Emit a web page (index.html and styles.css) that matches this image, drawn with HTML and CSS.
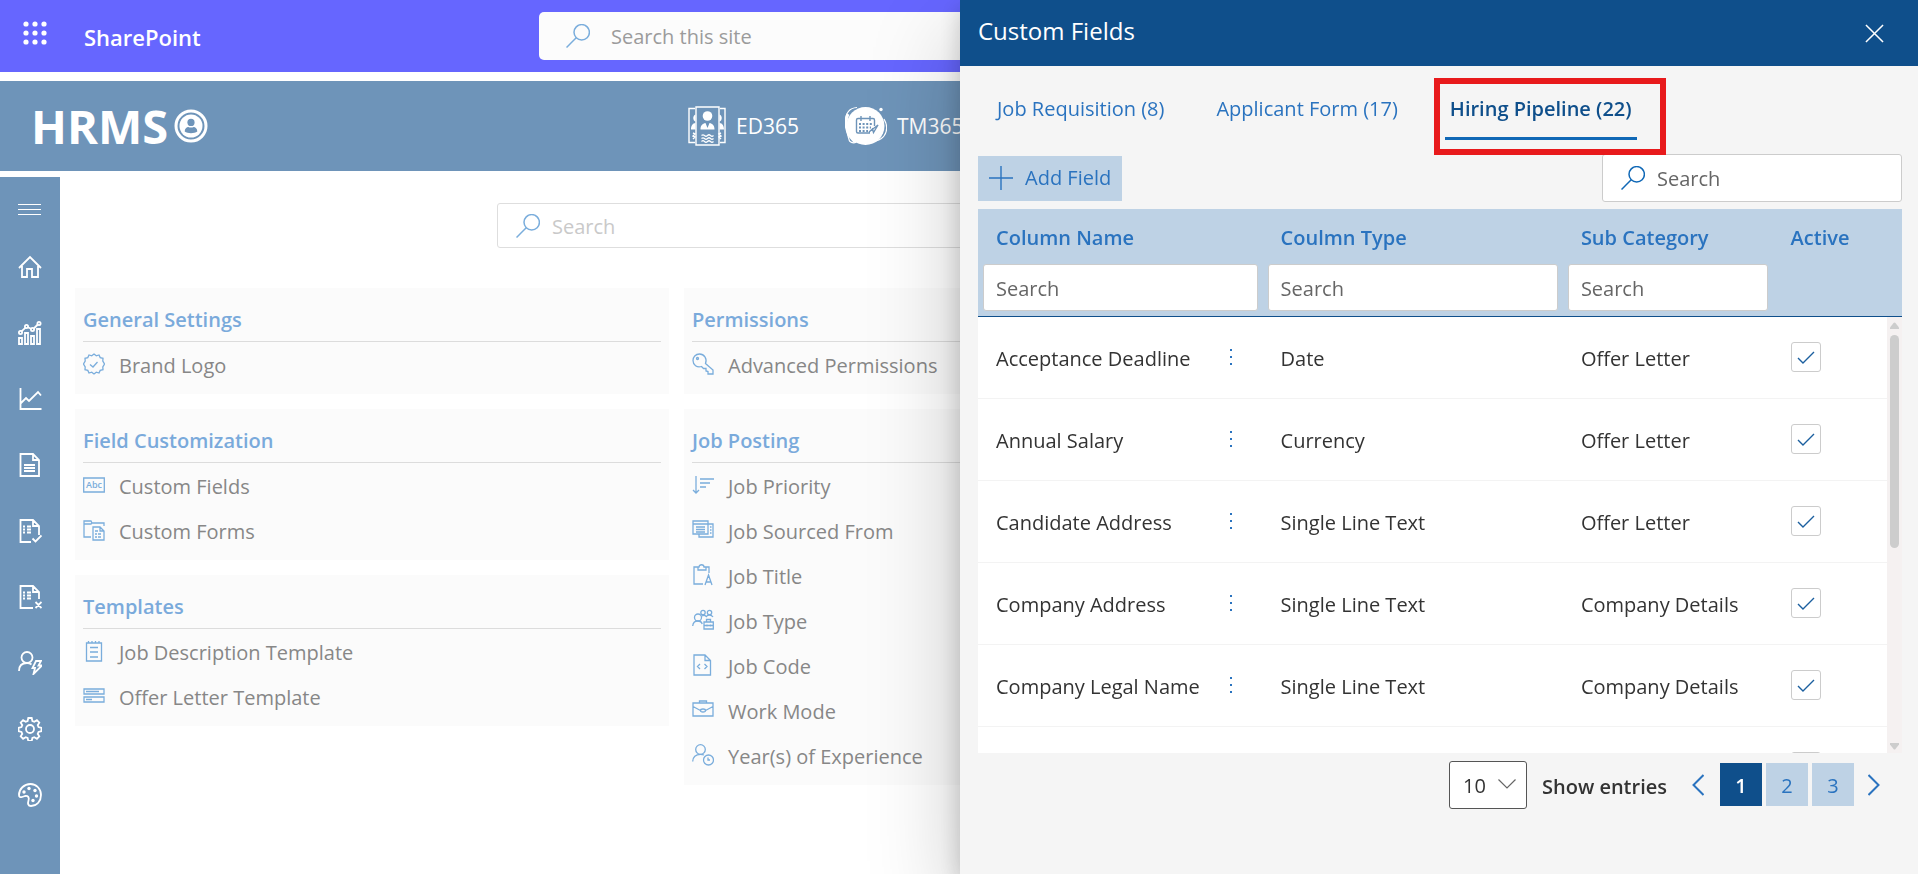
FILE: index.html
```html
<!DOCTYPE html>
<html lang="en">
<head>
<meta charset="utf-8">
<meta name="viewport" content="width=device-width, initial-scale=1">
<title>HRMS - Custom Fields</title>
<link rel="stylesheet" href="styles.css">
</head>
<body>
<svg class="sprite" aria-hidden="true">
  <symbol id="i-search" viewBox="0 0 24 24"><circle cx="15.7" cy="8.3" r="7.7"/><path d="M10.2 13.8L.5 23.5"/></symbol>
  <symbol id="i-check" viewBox="0 0 28 28"><path d="M6 15l5 5L22 9"/></symbol>
  <symbol id="i-dots" viewBox="0 0 4 18"><path d="M1 1h2v2H1zM1 8h2v2H1zM1 15h2v2H1z"/></symbol>
</svg>

<header class="suite-bar">
  <button class="icon-button" aria-label="App launcher">
    <svg class="waffle" viewBox="0 0 24 24"><g><circle cx="3" cy="3" r="2.6"/><circle cx="12" cy="3" r="2.6"/><circle cx="21" cy="3" r="2.6"/><circle cx="3" cy="12" r="2.6"/><circle cx="12" cy="12" r="2.6"/><circle cx="21" cy="12" r="2.6"/><circle cx="3" cy="21" r="2.6"/><circle cx="12" cy="21" r="2.6"/><circle cx="21" cy="21" r="2.6"/></g></svg>
  </button>
  <a class="suite-name" href="#">SharePoint</a>
  <label class="suite-search">
    <svg class="icon"><use href="#i-search"/></svg>
    <input type="text" placeholder="Search this site" aria-label="Search this site">
  </label>
</header>

<div class="brand-bar">
  <a class="brand" href="#">HRMS
    <svg viewBox="0 0 34 34"><circle cx="17" cy="17" r="15" fill="none" stroke="#fff" stroke-width="3"/><circle cx="17" cy="17" r="11.5" fill="#fff"/><g fill="#6e94b9"><circle cx="17" cy="13.4" r="3.6"/><path d="M10.7 22.6c0-3 2-4.6 3.6-4.6 1.600.8 3.800.8 5.400 0 1.600 0 3.600 1.600 3.600 4.600-3 2.200-9.600 2.200-12.600 0z"/></g></svg>
  </a>
  <nav class="apps">
    <a class="app" href="#">
      <svg class="app-ed" viewBox="0 0 38 40"><g fill="none" stroke="#fff" stroke-width="1.400"><path d="M8 1h23v38H8z"/><path d="M7 2.500H1v34h6M32 2.500h5v34h-5"/><path d="M13.500 29.500q1.500-1.500 3 0t3 0 3 0 3 0M13.500 32.500q1.500-1.500 3 0t3 0 3 0 3 0M13.500 35.500q1.500-1.500 3 0t3 0 3 0 3 0" stroke-width="1.200"/><path d="M5 27l2 1-2 2 2 1-2 2M33 27l-2 1 2 2-2 1 2 2"/></g><g fill="#fff"><circle cx="19.500" cy="10" r="4.800"/><path d="M12.500 23.500c0-4 2-6 5-6.500l2 5 2-5c3 .5 5 2.500 5 6.500zM7.500 8.500c-3 1-3 6 0 7zM7.500 17c-3 0-4.500 3-4.500 6.500h4.500zM31.500 8.500c3 1 3 6 0 7zM31.500 17c3 0 4.500 3 4.500 6.500h-4.500z"/></g></svg>
      ED365</a>
    <a class="app" href="#">
      <svg class="app-tm" viewBox="0 0 42 40"><circle cx="20.500" cy="20" r="19" fill="#fff"/><g fill="none" stroke="#fff"><path d="M12 1.500C4 2 .5 8 .6 16c0 6 2 10 3.400 14M1.500 24c1 4 2 8 3 11 2 2 5 2 7 1M39 13c3.500 6 3.500 12 0 17-2 3-5 4-8 5" stroke-width="1.200"/><path d="M3 8C0 14 1 22 4 29l6 7" stroke-width="3"/></g><circle cx="36" cy="3.500" r="1.700" fill="#fff"/><g fill="none" stroke="#6e94b9" stroke-width="1.400"><path d="M25 27H13q-1.500 0-1.500-1.500V14q0-1.500 1.500-1.500h15q1.500 0 1.500 1.500v6M16 10v5M25 10v5M24 26l9-7-4.500 7.500-1-3.500z"/><path d="M14 18h13M14 21.500h12M14 25h9" stroke-width="2" stroke-dasharray="2 1.600"/></g></svg>
      TM365</a>
  </nav>
</div>

<div class="shell">
  <nav class="rail" aria-label="Main">
    <button class="rail-menu" aria-label="Menu"><svg viewBox="0 0 24 24"><path d="M0 7.500h23M0 12.500h23M0 17.500h23" stroke-width="1"/></svg></button>
    <a href="#" aria-label="Home"><svg viewBox="0 0 24 24"><path d="M1 13L12 2l11 11M4 11v11h5v-8h5v8h6V11"/></svg></a>
    <a href="#" aria-label="Analytics"><svg viewBox="0 0 24 24"><path d="M1 17h3v6H1zM7 12h3v11H7zM13 15h3v8h-3zM19 8h3v15h-3z"/><circle cx="2.500" cy="11.500" r="1.600"/><circle cx="8.500" cy="5.500" r="1.600"/><circle cx="14.500" cy="8.500" r="1.600"/><circle cx="21" cy="2.500" r="1.600"/><path d="M3.500 10.300l4-3.700M10 6.200l3 1.500M15.800 7.500l4-4"/></svg></a>
    <a href="#" aria-label="Reports"><svg viewBox="0 0 24 24"><path d="M2.500 1v21H23.500M2.500 16.500L8 11l3 3 9-9 3 3.500"/></svg></a>
    <a href="#" aria-label="Documents"><svg viewBox="0 0 24 24"><path d="M2.500 1H15l6 6v16H2.500zM15 1v6h6M6 12h11M6 15h11M6 18h11"/></svg></a>
    <a href="#" aria-label="Approved"><svg viewBox="0 0 24 24"><path d="M13 23H2.500V1H15l6 6v9M15 1v6h6M5 7.500h2M5 10.500h2M5 13.500h2M9 7.500h4M9 10.500h4M9 13.500h4M14.500 19.500l3 3 6-6"/></svg></a>
    <a href="#" aria-label="Rejected"><svg viewBox="0 0 24 24"><path d="M15 23H2.500V1H15l6 6v7M15 1v6h6M5 7.500h2M5 10.500h2M5 13.500h2M9 7.500h4M9 10.500h4M9 13.500h4M17.500 17l6 6M23.500 17l-6 6"/></svg></a>
    <a href="#" aria-label="User actions"><svg viewBox="0 0 24 24"><circle cx="9" cy="6.500" r="5.500"/><path d="M1 20c0-5 3-8 8-8 2 0 3 .4 4.500 1.500M18 10h5l-2.500 4.500H24L15.500 23l1.500-6h-2.500z"/></svg></a>
    <a href="#" aria-label="Settings"><svg viewBox="0 0 24 24"><circle cx="12" cy="12" r="4"/><path d="M10.300 1h3.400l.7 3 1.900.8 2.600-1.600 2.400 2.400-1.600 2.600.8 1.900 3 .7v3.400l-3 .7-.8 1.900 1.600 2.600-2.400 2.400-2.600-1.600-1.900.8-.7 3h-3.400l-.7-3-1.900-.8-2.600 1.600-2.400-2.400 1.600-2.600-.8-1.900-3-.7v-3.400l3-.7.8-1.900-1.600-2.600 2.400-2.400 2.600 1.600 1.900-.8z"/></svg></a>
    <a href="#" aria-label="Theme"><svg viewBox="0 0 24 24"><path d="M12.500 1C6 1 1 6 1 12c0 2 1.500 2.500 3 2l3-1c3-.6 4.500 1.500 3.500 4.500-1 3-.5 5.500 2.500 5.500 6 0 10-5 10-11S18.500 1 12.500 1z"/><g fill="#fff" stroke="none"><circle cx="6" cy="9" r="1.700"/><circle cx="11" cy="5.500" r="1.700"/><circle cx="17" cy="7.500" r="1.700"/><circle cx="18.500" cy="13" r="1.700"/><circle cx="15" cy="17.500" r="1.700"/></g></svg></a>
  </nav>

  <main class="content">
    <label class="page-search">
      <svg class="icon"><use href="#i-search"/></svg>
      <input type="text" placeholder="Search" aria-label="Search settings">
    </label>
    <div class="columns">
      <div class="column">
        <section class="card">
          <h2>General Settings</h2>
          <a class="item" href="#"><svg viewBox="0 0 22 22"><path d="M11 1l2.300 1.800L16 2l1.200 2.600 2.800.7-.2 2.900L21.500 11l-1.700 2.800.2 2.900-2.800.7L16 20l-2.700-.8L11 21l-2.300-1.800L6 20l-1.200-2.600-2.800-.7.200-2.900L.5 11l1.700-2.800L2 5.300l2.800-.7L6 2l2.700.8zM7 11.500l3 2.500 4.500-5"/></svg>Brand Logo</a>
        </section>
        <section class="card">
          <h2>Field Customization</h2>
          <a class="item" href="#"><svg viewBox="0 0 22 22"><path d="M.7 4h20.600v14H.7z"/><text x="11" y="14" text-anchor="middle">Abc</text></svg>Custom Fields</a>
          <a class="item" href="#"><svg viewBox="0 0 22 22"><path d="M8 18H1V2h7l1 2h12v3M1 5h7l1-1M10 8h7l4 4v9H10zM17 8v4h4M12 12h3M12 15h2M12 18h2M15 15h3M15 18h3"/></svg>Custom Forms</a>
        </section>
        <section class="card">
          <h2>Templates</h2>
          <a class="item" href="#"><svg viewBox="0 0 22 22"><path d="M3.500 3h15v18h-15zM5.500 1v2M9 1v2M12.500 1v2M16 1v2M7 7.500h8M7 12h8M7 17h8"/></svg>Job Description Template</a>
          <a class="item" href="#"><svg viewBox="0 0 22 22"><path d="M1 4h20v5H1zM1 12h20v5H1zM3 6.500h13M3 14.500h6"/></svg>Offer Letter Template</a>
        </section>
      </div>
      <div class="column">
        <section class="card">
          <h2>Permissions</h2>
          <a class="item" href="#"><svg viewBox="0 0 22 22"><path d="M13.500 10.500c2-5-1.500-9.500-6-9.500C3.500 1 1 4 1 7.500c0 4.500 4 7.500 8.500 6l2 2h2.500v2.500l2 .5v2.500h5V17z"/><circle cx="5.500" cy="5.500" r="1"/></svg>Advanced Permissions</a>
        </section>
        <section class="card">
          <h2>Job Posting</h2>
          <a class="item" href="#"><svg viewBox="0 0 22 22"><path d="M4 2v17M1 16l3 3 3-3M8 5h14M8 9h10M8 13h6"/></svg>Job Priority</a>
          <a class="item" href="#"><svg viewBox="0 0 22 22"><path d="M1 2h15v13H1zM1 5h15M4 8h9M4 10.500h9M4 13h9M16 5h5v13H7v-3M18 8h1.500M18 11h1.500M18 14h1.500"/></svg>Job Sourced From</a>
          <a class="item" href="#"><svg viewBox="0 0 22 22"><path d="M11 20H2V3h5c0-3 5-3 5 0h5v6M6 3v3h8V3M13 21l3.500-10L20 21M14 18h5"/></svg>Job Title</a>
          <a class="item" href="#"><svg viewBox="0 0 22 22"><circle cx="6" cy="8.500" r="3.500"/><circle cx="11" cy="3.500" r="2.200"/><circle cx="17.500" cy="3.500" r="2.200"/><path d="M.7 17c.3-3.500 2-5 5-5s4 1 4.500 3M10 7c2-1.500 3-1 4.300.5 1.500-2 5-2 6.700.5M12 13h9.300v7H12zM12 16.500h9M14.500 13v-2.500h4V13M15 15.500v2M18.500 15.500v2"/></svg>Job Type</a>
          <a class="item" href="#"><svg viewBox="0 0 22 22"><path d="M2 1h11l5.500 5.500V21H2zM13 1v5.500h5.500M8 10l-2.500 2.500L8 15M12.500 10l2.500 2.500L12.500 15"/></svg>Job Code</a>
          <a class="item" href="#"><svg viewBox="0 0 22 22"><path d="M1 4h20v13H1zM7.500 4V2h7v2M1 7.500l7.500 4M21 7.500l-7.500 4"/><ellipse cx="11" cy="11.500" rx="2.500" ry="1.500"/></svg>Work Mode</a>
          <a class="item" href="#"><svg viewBox="0 0 22 22"><circle cx="8.500" cy="5.500" r="4.800"/><path d="M.7 17.500c0-4.500 3-7.200 7.800-7.200 1.500 0 2.500.3 3.500.7M16 13.500V16h2"/><circle cx="16.500" cy="16" r="5"/></svg>Year(s) of Experience</a>
        </section>
      </div>
    </div>
  </main>
</div>

<aside class="panel" role="dialog" aria-label="Custom Fields">
  <header class="panel-head">
    <h1>Custom Fields</h1>
    <button class="icon-button" aria-label="Close"><svg viewBox="0 0 20 20"><path d="M1 1l18 18M19 1L1 19"/></svg></button>
  </header>
  <div class="panel-body">
    <div class="tabs" role="tablist">
      <button class="tab" role="tab">Job Requisition (8)</button>
      <button class="tab" role="tab">Applicant Form (17)</button>
      <button class="tab tab-active" role="tab" aria-selected="true">Hiring Pipeline (22)</button>
    </div>
    <div class="toolbar">
      <button class="add-button"><svg viewBox="0 0 24 24"><path d="M12 0v24M0 12h24"/></svg>Add Field</button>
      <label class="panel-search">
        <svg class="icon"><use href="#i-search"/></svg>
        <input type="text" placeholder="Search" aria-label="Search fields">
      </label>
    </div>
    <div class="table-wrap">
      <table class="grid">
        <colgroup><col class="c-name"><col class="c-type"><col class="c-sub"><col></colgroup>
        <thead>
          <tr>
            <th scope="col"><span>Column Name</span><input type="text" placeholder="Search" aria-label="Filter Column Name"></th>
            <th scope="col"><span>Coulmn Type</span><input type="text" placeholder="Search" aria-label="Filter Coulmn Type"></th>
            <th scope="col"><span>Sub Category</span><input type="text" placeholder="Search" aria-label="Filter Sub Category"></th>
            <th scope="col"><span>Active</span></th>
          </tr>
        </thead>
        <tbody>
          <tr><td><div class="name">Acceptance Deadline<button class="more" aria-label="More"><svg><use href="#i-dots"/></svg></button></div></td><td>Date</td><td>Offer Letter</td><td><label class="tick"><input type="checkbox" checked aria-label="Active"><svg><use href="#i-check"/></svg></label></td></tr>
          <tr><td><div class="name">Annual Salary<button class="more" aria-label="More"><svg><use href="#i-dots"/></svg></button></div></td><td>Currency</td><td>Offer Letter</td><td><label class="tick"><input type="checkbox" checked aria-label="Active"><svg><use href="#i-check"/></svg></label></td></tr>
          <tr><td><div class="name">Candidate Address<button class="more" aria-label="More"><svg><use href="#i-dots"/></svg></button></div></td><td>Single Line Text</td><td>Offer Letter</td><td><label class="tick"><input type="checkbox" checked aria-label="Active"><svg><use href="#i-check"/></svg></label></td></tr>
          <tr><td><div class="name">Company Address<button class="more" aria-label="More"><svg><use href="#i-dots"/></svg></button></div></td><td>Single Line Text</td><td>Company Details</td><td><label class="tick"><input type="checkbox" checked aria-label="Active"><svg><use href="#i-check"/></svg></label></td></tr>
          <tr><td><div class="name">Company Legal Name<button class="more" aria-label="More"><svg><use href="#i-dots"/></svg></button></div></td><td>Single Line Text</td><td>Company Details</td><td><label class="tick"><input type="checkbox" checked aria-label="Active"><svg><use href="#i-check"/></svg></label></td></tr>
          <tr><td></td><td></td><td></td><td><label class="tick"><input type="checkbox" checked aria-label="Active"><svg><use href="#i-check"/></svg></label></td></tr>
        </tbody>
      </table>
      <div class="scrollbar" aria-hidden="true">
        <svg viewBox="0 0 9 8"><path d="M3.500 1Q4.500 0 5.500 1L9 5.500V7H0V5.500z"/></svg>
        <div class="track"><div class="thumb"></div></div>
        <svg viewBox="0 0 9 8"><path d="M0 1h9v1.500L5.500 7q-1 1-2 0L0 2.500z"/></svg>
      </div>
    </div>
    <footer class="pager">
      <div class="size">
        <select id="page-size"><option>10</option></select>
        <svg viewBox="0 0 18 10"><path d="M.5.500L9 9 17.500.500"/></svg>
      </div>
      <label class="size-label" for="page-size">Show entries</label>
      <nav class="pages" aria-label="Pages">
        <button class="step" aria-label="Previous"><svg viewBox="0 0 12 22"><path d="M11.500 1l-10 10 10 10"/></svg></button>
        <button class="page page-current">1</button>
        <button class="page">2</button>
        <button class="page">3</button>
        <button class="step" aria-label="Next"><svg viewBox="0 0 12 22"><path d="M.5 1l10 10-10 10"/></svg></button>
      </nav>
    </footer>
  </div>
</aside>
</body>
</html>
```

FILE: styles.css
```css
* { box-sizing: border-box; }

body {
  margin: 0;
  min-height: 100vh;
  display: flex;
  flex-direction: column;
  overflow: hidden;
  background: #fff;
  color: #333;
  font: 20px/28px "Open Sans", "Noto Sans", sans-serif;
}

a { color: inherit; text-decoration: none; }
button { padding: 0; border: 0; background: none; font: inherit; color: inherit; cursor: pointer; }
input { font: inherit; color: inherit; border: 0; outline: 0; background: none; min-width: 0; padding: 2px 0 0; }
svg { display: block; flex: none; }
.sprite { position: absolute; width: 0; height: 0; }
.icon { width: 24px; height: 24px; fill: none; stroke: #7aaddc; stroke-width: 1.5; }

/* suite bar */
.suite-bar {
  display: grid;
  grid-template-columns: 84px 1fr minmax(0, 840px) 1fr;
  align-items: center;
  height: 72px;
  padding-right: 84px;
  background: #66f;
  color: #fff;
}
.suite-bar .icon-button { padding: 0 0 6px 23px; }
.waffle { width: 24px; height: 24px; fill: #fff; }
.suite-name { padding-top: 2px; font-size: 22px; font-weight: 600; }
.suite-search {
  display: flex;
  align-items: center;
  gap: 21px;
  height: 48px;
  padding: 0 27px;
  border-radius: 5px;
  background: #fcfcfc;
}
.suite-search input { flex: 1; color: #9b9b9b; }
.suite-search input::placeholder { color: #9b9b9b; opacity: 1; }

/* brand bar */
.brand-bar {
  display: flex;
  align-items: center;
  height: 90px;
  margin-top: 9px;
  background: #6e94b9;
  color: #fff;
}
.brand {
  display: flex;
  align-items: center;
  gap: 6px;
  width: 653px;
  padding-left: 31px;
  font-size: 47px;
  font-weight: 700;
  line-height: 60px;
}
.brand svg { width: 34px; height: 34px; }
.apps { display: flex; gap: 46px; padding: 0 35px; }
.app { display: flex; align-items: center; gap: 10px; font-size: 21px; }
.app-ed { width: 38px; height: 40px; }
.app-tm { width: 42px; height: 40px; }

/* page shell */
.shell { flex: 1; display: flex; margin-top: 6px; }
.rail { width: 60px; padding-top: 6px; background: #6e94b9; }
.rail a, .rail button { display: flex; align-items: center; justify-content: center; width: 60px; height: 66px; }
.rail .rail-menu { height: 51px; }
.rail svg { width: 24px; height: 24px; fill: none; stroke: #fff; stroke-width: 1.8; }
.content { flex: 1; padding: 26px 31px 0 15px; }
.page-search {
  display: flex;
  align-items: center;
  gap: 12px;
  max-width: 968px;
  height: 45px;
  margin: 0 auto 40px;
  padding: 0 18px;
  border: 1px solid #dedede;
  border-radius: 3px;
}
.page-search input { flex: 1; }
.page-search input::placeholder { color: #c9c9c9; opacity: 1; }
.columns { display: grid; grid-template-columns: repeat(3, 1fr); gap: 15px; }
.column { display: flex; flex-direction: column; gap: 15px; }
.card { padding: 0 8px 7px; background: #fbfbfb; color: #878787; }
.card h2 {
  margin: 0;
  height: 54px;
  padding-top: 18px;
  border-bottom: 1px solid #dcdcdc;
  color: #7aaadb;
  font-size: 20px;
  font-weight: 600;
}
.item { display: flex; align-items: center; gap: 14px; height: 45px; padding-top: 2px; }
.item svg { width: 22px; height: 22px; margin-bottom: 4px; fill: none; stroke: #7aaddc; stroke-width: 1.3; }
.item text { fill: #7aaddc; stroke: none; font-size: 9px; font-weight: 600; }

/* side panel */
.panel {
  position: fixed;
  inset: 0 0 0 auto;
  width: calc(50% - 1px);
  display: flex;
  flex-direction: column;
  background: #f5f5f5;
  box-shadow: 0 38px 86px rgba(0, 0, 0, .22), 0 7px 22px rgba(0, 0, 0, .18);
}
.panel-head {
  display: flex;
  align-items: center;
  justify-content: space-between;
  height: 66px;
  padding: 0 34px 0 18px;
  background: #0f4f8b;
  color: #fff;
}
.panel-head h1 { margin: 0; padding-bottom: 4px; font-size: 24px; font-weight: 400; }
.panel-head svg { width: 19px; height: 19px; fill: none; stroke: #fff; stroke-width: 1.6; }
.panel-body { flex: 1; min-height: 0; display: flex; flex-direction: column; padding: 0 16px 0 18px; }

.tabs { display: flex; gap: 42px; padding: 0 14px; height: 74px; color: #2a73bf; }
.tab { position: relative; padding: 14px 5px 0; border-bottom: 3px solid transparent; white-space: nowrap; }
.tab-active { border-color: #1068b6; color: #0f4f8b; font-weight: 600; }
.tab-active::after {
  content: "";
  position: absolute;
  inset: 12px -29px -18px -11px;
  border: 6px solid #e81a1c;
}

.toolbar { display: flex; align-items: center; justify-content: space-between; margin: 14px 0 7px; }
.add-button {
  display: flex;
  align-items: center;
  gap: 12px;
  height: 45px;
  padding: 0 11px;
  background: #bed2e5;
  color: #2a73bf;
}
.add-button svg { width: 24px; height: 24px; stroke: #2a73bf; stroke-width: 1.4; }
.panel-search {
  display: flex;
  align-items: center;
  gap: 12px;
  width: 300px;
  height: 48px;
  padding: 0 18px;
  border: 1px solid #ccc;
  border-radius: 3px;
  background: #fff;
}
.panel-search .icon { stroke: #1068b6; }
.panel-search input { flex: 1; }
.panel-search input::placeholder, th input::placeholder { color: #666; opacity: 1; }

.table-wrap { flex: 1; min-height: 0; position: relative; overflow: hidden; background: #fff; }
.grid { width: 100%; table-layout: fixed; border-collapse: separate; border-spacing: 0; }
.c-name { width: 30.8%; }
.c-type { width: 32.5%; }
.c-sub { width: 22.7%; }
th {
  height: 108px;
  padding: 0 5px 5px;
  vertical-align: top;
  text-align: left;
  font-weight: 600;
  color: #2a73bf;
  background: #bed2e5;
  border-bottom: 1px solid #0f4f8b;
}
th span { display: block; padding: 15px 13px 12px; }
th input {
  display: block;
  width: 100%;
  height: 47px;
  padding: 2px 12px 0;
  border: 1px solid #ccc;
  border-radius: 3px;
  background: #fff;
  color: #333;
  font-weight: 400;
}
td { height: 82px; padding: 2px 18px 0; border-bottom: 1px solid #f3f3f3; white-space: nowrap; }
.name { display: flex; align-items: center; justify-content: space-between; padding-right: 12px; }
.more svg { width: 4px; height: 18px; margin-bottom: 4px; fill: #2a73bf; }
.tick { position: relative; display: block; width: 30px; height: 30px; margin-bottom: 4px; }
.tick input {
  appearance: none;
  display: block;
  width: 30px;
  height: 30px;
  margin: 0;
  border: 1px solid #ccc;
  border-radius: 3px;
  background: #fff;
}
.tick svg { position: absolute; inset: 1px; width: 28px; height: 28px; fill: none; stroke: #1b5f9f; stroke-width: 1.4; }

.scrollbar {
  position: absolute;
  inset: 108px 0 0 auto;
  width: 15px;
  display: flex;
  flex-direction: column;
  align-items: center;
  gap: 5px;
  padding: 5px 0 3px;
  background: #f5f1f1;
}
.scrollbar svg { width: 9px; height: 8px; fill: #cdcdcd; }
.track { flex: 1; width: 9px; }
.thumb { height: 53%; border-radius: 5px; background: #cdcdcd; }

.pager { display: flex; justify-content: flex-end; align-items: flex-start; height: 121px; padding: 8px 22px 0 0; }
.size { position: relative; }
.size select {
  appearance: none;
  display: block;
  width: 78px;
  height: 48px;
  padding: 2px 13px 0;
  border: 1px solid #555;
  border-radius: 3px;
  background: #fff;
  color: #333;
  font: inherit;
}
.size svg { position: absolute; right: 11px; top: 18px; width: 18px; height: 10px; fill: none; stroke: #666; stroke-width: 1.2; pointer-events: none; }
.size-label { padding: 12px 25px 0 15px; font-weight: 600; }
.pages { display: flex; align-items: center; gap: 4px; padding-top: 2px; color: #2a73bf; }
.page { width: 42px; height: 43px; padding-top: 2px; background: #bed2e5; }
.page-current { background: #0f4f8b; color: #fff; font-weight: 600; }
.step svg { width: 12px; height: 22px; fill: none; stroke: #2a73bf; stroke-width: 2; }
.step:first-child { margin-right: 12px; }
.step:last-child { margin-left: 10px; }
```
